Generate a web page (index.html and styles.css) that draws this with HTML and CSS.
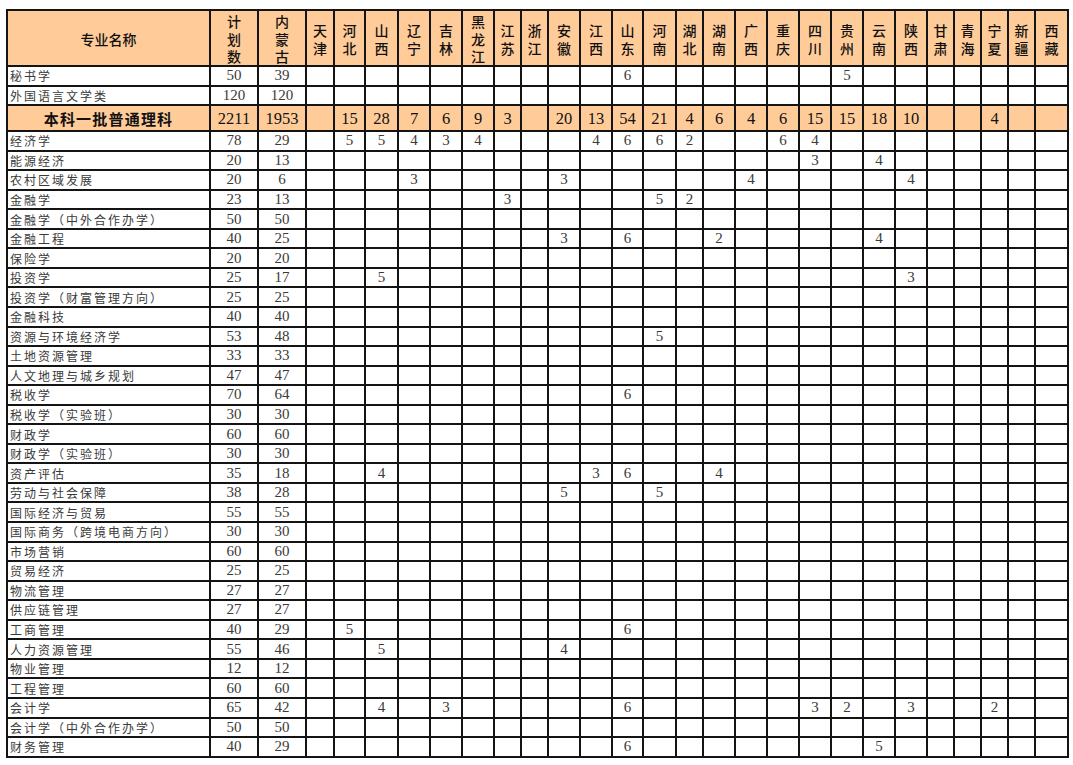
FILE: index.html
```html
<!DOCTYPE html>
<html lang="zh-CN">
<head>
<meta charset="utf-8">
<title>招生计划</title>
<link rel="stylesheet" href="styles.css">
</head>
<body>
<div class="sheet">
<table class="plan">
<colgroup>
<col class="w203"><col class="w48"><col class="w48"><col class="w28"><col class="w31"><col class="w33"><col class="w32"><col class="w32"><col class="w32"><col class="w27"><col class="w27"><col class="w32"><col class="w32"><col class="w31"><col class="w33"><col class="w27"><col class="w32"><col class="w32"><col class="w32"><col class="w32"><col class="w32"><col class="w32"><col class="w32"><col class="w27"><col class="w27"><col class="w27"><col class="w27"><col class="w33">
</colgroup>
<thead>
<tr><th><div class="hd">专业名称</div></th><th><div class="hd">计<br>划<br>数</div></th><th><div class="hd">内<br>蒙<br>古</div></th><th><div class="hd">天<br>津</div></th><th><div class="hd">河<br>北</div></th><th><div class="hd">山<br>西</div></th><th><div class="hd">辽<br>宁</div></th><th><div class="hd">吉<br>林</div></th><th><div class="hd">黑<br>龙<br>江</div></th><th><div class="hd">江<br>苏</div></th><th><div class="hd">浙<br>江</div></th><th><div class="hd">安<br>徽</div></th><th><div class="hd">江<br>西</div></th><th><div class="hd">山<br>东</div></th><th><div class="hd">河<br>南</div></th><th><div class="hd">湖<br>北</div></th><th><div class="hd">湖<br>南</div></th><th><div class="hd">广<br>西</div></th><th><div class="hd">重<br>庆</div></th><th><div class="hd">四<br>川</div></th><th><div class="hd">贵<br>州</div></th><th><div class="hd">云<br>南</div></th><th><div class="hd">陕<br>西</div></th><th><div class="hd">甘<br>肃</div></th><th><div class="hd">青<br>海</div></th><th><div class="hd">宁<br>夏</div></th><th><div class="hd">新<br>疆</div></th><th><div class="hd">西<br>藏</div></th></tr>
</thead>
<tbody>
<tr><td class="n">秘书学</td><td>50</td><td>39</td><td></td><td></td><td></td><td></td><td></td><td></td><td></td><td></td><td></td><td></td><td>6</td><td></td><td></td><td></td><td></td><td></td><td></td><td>5</td><td></td><td></td><td></td><td></td><td></td><td></td><td></td></tr>
<tr><td class="n">外国语言文学类</td><td>120</td><td>120</td><td></td><td></td><td></td><td></td><td></td><td></td><td></td><td></td><td></td><td></td><td></td><td></td><td></td><td></td><td></td><td></td><td></td><td></td><td></td><td></td><td></td><td></td><td></td><td></td><td></td></tr>
<tr class="sum"><td class="sn">本科一批普通理科</td><td>2211</td><td>1953</td><td></td><td>15</td><td>28</td><td>7</td><td>6</td><td>9</td><td>3</td><td></td><td>20</td><td>13</td><td>54</td><td>21</td><td>4</td><td>6</td><td>4</td><td>6</td><td>15</td><td>15</td><td>18</td><td>10</td><td></td><td></td><td>4</td><td></td><td></td></tr>
<tr><td class="n">经济学</td><td>78</td><td>29</td><td></td><td>5</td><td>5</td><td>4</td><td>3</td><td>4</td><td></td><td></td><td></td><td>4</td><td>6</td><td>6</td><td>2</td><td></td><td></td><td>6</td><td>4</td><td></td><td></td><td></td><td></td><td></td><td></td><td></td><td></td></tr>
<tr><td class="n">能源经济</td><td>20</td><td>13</td><td></td><td></td><td></td><td></td><td></td><td></td><td></td><td></td><td></td><td></td><td></td><td></td><td></td><td></td><td></td><td></td><td>3</td><td></td><td>4</td><td></td><td></td><td></td><td></td><td></td><td></td></tr>
<tr><td class="n">农村区域发展</td><td>20</td><td>6</td><td></td><td></td><td></td><td>3</td><td></td><td></td><td></td><td></td><td>3</td><td></td><td></td><td></td><td></td><td></td><td>4</td><td></td><td></td><td></td><td></td><td>4</td><td></td><td></td><td></td><td></td><td></td></tr>
<tr><td class="n">金融学</td><td>23</td><td>13</td><td></td><td></td><td></td><td></td><td></td><td></td><td>3</td><td></td><td></td><td></td><td></td><td>5</td><td>2</td><td></td><td></td><td></td><td></td><td></td><td></td><td></td><td></td><td></td><td></td><td></td><td></td></tr>
<tr><td class="n">金融学（中外合作办学）</td><td>50</td><td>50</td><td></td><td></td><td></td><td></td><td></td><td></td><td></td><td></td><td></td><td></td><td></td><td></td><td></td><td></td><td></td><td></td><td></td><td></td><td></td><td></td><td></td><td></td><td></td><td></td><td></td></tr>
<tr><td class="n">金融工程</td><td>40</td><td>25</td><td></td><td></td><td></td><td></td><td></td><td></td><td></td><td></td><td>3</td><td></td><td>6</td><td></td><td></td><td>2</td><td></td><td></td><td></td><td></td><td>4</td><td></td><td></td><td></td><td></td><td></td><td></td></tr>
<tr><td class="n">保险学</td><td>20</td><td>20</td><td></td><td></td><td></td><td></td><td></td><td></td><td></td><td></td><td></td><td></td><td></td><td></td><td></td><td></td><td></td><td></td><td></td><td></td><td></td><td></td><td></td><td></td><td></td><td></td><td></td></tr>
<tr><td class="n">投资学</td><td>25</td><td>17</td><td></td><td></td><td>5</td><td></td><td></td><td></td><td></td><td></td><td></td><td></td><td></td><td></td><td></td><td></td><td></td><td></td><td></td><td></td><td></td><td>3</td><td></td><td></td><td></td><td></td><td></td></tr>
<tr><td class="n">投资学（财富管理方向）</td><td>25</td><td>25</td><td></td><td></td><td></td><td></td><td></td><td></td><td></td><td></td><td></td><td></td><td></td><td></td><td></td><td></td><td></td><td></td><td></td><td></td><td></td><td></td><td></td><td></td><td></td><td></td><td></td></tr>
<tr><td class="n">金融科技</td><td>40</td><td>40</td><td></td><td></td><td></td><td></td><td></td><td></td><td></td><td></td><td></td><td></td><td></td><td></td><td></td><td></td><td></td><td></td><td></td><td></td><td></td><td></td><td></td><td></td><td></td><td></td><td></td></tr>
<tr><td class="n">资源与环境经济学</td><td>53</td><td>48</td><td></td><td></td><td></td><td></td><td></td><td></td><td></td><td></td><td></td><td></td><td></td><td>5</td><td></td><td></td><td></td><td></td><td></td><td></td><td></td><td></td><td></td><td></td><td></td><td></td><td></td></tr>
<tr><td class="n">土地资源管理</td><td>33</td><td>33</td><td></td><td></td><td></td><td></td><td></td><td></td><td></td><td></td><td></td><td></td><td></td><td></td><td></td><td></td><td></td><td></td><td></td><td></td><td></td><td></td><td></td><td></td><td></td><td></td><td></td></tr>
<tr><td class="n">人文地理与城乡规划</td><td>47</td><td>47</td><td></td><td></td><td></td><td></td><td></td><td></td><td></td><td></td><td></td><td></td><td></td><td></td><td></td><td></td><td></td><td></td><td></td><td></td><td></td><td></td><td></td><td></td><td></td><td></td><td></td></tr>
<tr><td class="n">税收学</td><td>70</td><td>64</td><td></td><td></td><td></td><td></td><td></td><td></td><td></td><td></td><td></td><td></td><td>6</td><td></td><td></td><td></td><td></td><td></td><td></td><td></td><td></td><td></td><td></td><td></td><td></td><td></td><td></td></tr>
<tr><td class="n">税收学（实验班）</td><td>30</td><td>30</td><td></td><td></td><td></td><td></td><td></td><td></td><td></td><td></td><td></td><td></td><td></td><td></td><td></td><td></td><td></td><td></td><td></td><td></td><td></td><td></td><td></td><td></td><td></td><td></td><td></td></tr>
<tr><td class="n">财政学</td><td>60</td><td>60</td><td></td><td></td><td></td><td></td><td></td><td></td><td></td><td></td><td></td><td></td><td></td><td></td><td></td><td></td><td></td><td></td><td></td><td></td><td></td><td></td><td></td><td></td><td></td><td></td><td></td></tr>
<tr><td class="n">财政学（实验班）</td><td>30</td><td>30</td><td></td><td></td><td></td><td></td><td></td><td></td><td></td><td></td><td></td><td></td><td></td><td></td><td></td><td></td><td></td><td></td><td></td><td></td><td></td><td></td><td></td><td></td><td></td><td></td><td></td></tr>
<tr><td class="n">资产评估</td><td>35</td><td>18</td><td></td><td></td><td>4</td><td></td><td></td><td></td><td></td><td></td><td></td><td>3</td><td>6</td><td></td><td></td><td>4</td><td></td><td></td><td></td><td></td><td></td><td></td><td></td><td></td><td></td><td></td><td></td></tr>
<tr><td class="n">劳动与社会保障</td><td>38</td><td>28</td><td></td><td></td><td></td><td></td><td></td><td></td><td></td><td></td><td>5</td><td></td><td></td><td>5</td><td></td><td></td><td></td><td></td><td></td><td></td><td></td><td></td><td></td><td></td><td></td><td></td><td></td></tr>
<tr><td class="n">国际经济与贸易</td><td>55</td><td>55</td><td></td><td></td><td></td><td></td><td></td><td></td><td></td><td></td><td></td><td></td><td></td><td></td><td></td><td></td><td></td><td></td><td></td><td></td><td></td><td></td><td></td><td></td><td></td><td></td><td></td></tr>
<tr><td class="n">国际商务（跨境电商方向）</td><td>30</td><td>30</td><td></td><td></td><td></td><td></td><td></td><td></td><td></td><td></td><td></td><td></td><td></td><td></td><td></td><td></td><td></td><td></td><td></td><td></td><td></td><td></td><td></td><td></td><td></td><td></td><td></td></tr>
<tr><td class="n">市场营销</td><td>60</td><td>60</td><td></td><td></td><td></td><td></td><td></td><td></td><td></td><td></td><td></td><td></td><td></td><td></td><td></td><td></td><td></td><td></td><td></td><td></td><td></td><td></td><td></td><td></td><td></td><td></td><td></td></tr>
<tr><td class="n">贸易经济</td><td>25</td><td>25</td><td></td><td></td><td></td><td></td><td></td><td></td><td></td><td></td><td></td><td></td><td></td><td></td><td></td><td></td><td></td><td></td><td></td><td></td><td></td><td></td><td></td><td></td><td></td><td></td><td></td></tr>
<tr><td class="n">物流管理</td><td>27</td><td>27</td><td></td><td></td><td></td><td></td><td></td><td></td><td></td><td></td><td></td><td></td><td></td><td></td><td></td><td></td><td></td><td></td><td></td><td></td><td></td><td></td><td></td><td></td><td></td><td></td><td></td></tr>
<tr><td class="n">供应链管理</td><td>27</td><td>27</td><td></td><td></td><td></td><td></td><td></td><td></td><td></td><td></td><td></td><td></td><td></td><td></td><td></td><td></td><td></td><td></td><td></td><td></td><td></td><td></td><td></td><td></td><td></td><td></td><td></td></tr>
<tr><td class="n">工商管理</td><td>40</td><td>29</td><td></td><td>5</td><td></td><td></td><td></td><td></td><td></td><td></td><td></td><td></td><td>6</td><td></td><td></td><td></td><td></td><td></td><td></td><td></td><td></td><td></td><td></td><td></td><td></td><td></td><td></td></tr>
<tr><td class="n">人力资源管理</td><td>55</td><td>46</td><td></td><td></td><td>5</td><td></td><td></td><td></td><td></td><td></td><td>4</td><td></td><td></td><td></td><td></td><td></td><td></td><td></td><td></td><td></td><td></td><td></td><td></td><td></td><td></td><td></td><td></td></tr>
<tr><td class="n">物业管理</td><td>12</td><td>12</td><td></td><td></td><td></td><td></td><td></td><td></td><td></td><td></td><td></td><td></td><td></td><td></td><td></td><td></td><td></td><td></td><td></td><td></td><td></td><td></td><td></td><td></td><td></td><td></td><td></td></tr>
<tr><td class="n">工程管理</td><td>60</td><td>60</td><td></td><td></td><td></td><td></td><td></td><td></td><td></td><td></td><td></td><td></td><td></td><td></td><td></td><td></td><td></td><td></td><td></td><td></td><td></td><td></td><td></td><td></td><td></td><td></td><td></td></tr>
<tr><td class="n">会计学</td><td>65</td><td>42</td><td></td><td></td><td>4</td><td></td><td>3</td><td></td><td></td><td></td><td></td><td></td><td>6</td><td></td><td></td><td></td><td></td><td></td><td>3</td><td>2</td><td></td><td>3</td><td></td><td></td><td>2</td><td></td><td></td></tr>
<tr><td class="n">会计学（中外合作办学）</td><td>50</td><td>50</td><td></td><td></td><td></td><td></td><td></td><td></td><td></td><td></td><td></td><td></td><td></td><td></td><td></td><td></td><td></td><td></td><td></td><td></td><td></td><td></td><td></td><td></td><td></td><td></td><td></td></tr>
<tr><td class="n">财务管理</td><td>40</td><td>29</td><td></td><td></td><td></td><td></td><td></td><td></td><td></td><td></td><td></td><td></td><td>6</td><td></td><td></td><td></td><td></td><td></td><td></td><td></td><td>5</td><td></td><td></td><td></td><td></td><td></td><td></td></tr>
</tbody>
</table>
</div>
</body>
</html>
```

FILE: styles.css
```css
html, body {
  margin: 0;
  padding: 0;
  background: #ffffff;
}

.sheet {
  padding: 9px 0 0 6px;
}

.plan {
  border-collapse: collapse;
  table-layout: fixed;
  width: 1063px;
}

.w203 { width: 203px; }
.w48 { width: 48px; }
.w33 { width: 33px; }
.w32 { width: 32px; }
.w31 { width: 31px; }
.w28 { width: 28px; }
.w27 { width: 27px; }

.plan th,
.plan td {
  border: 2px solid #141414;
  padding: 0;
  text-align: center;
  white-space: nowrap;
  overflow: hidden;
}

.plan th {
  overflow: visible;
  background: #ffcc99;
  height: 54px;
  vertical-align: top;
  font-family: "Noto Sans CJK SC", sans-serif;
  font-weight: 500;
  font-size: 14px;
  line-height: 17.5px;
  color: #111;
}

.hd {
  height: 54px;
  box-sizing: border-box;
  padding-top: 3px;
  display: flex;
  flex-direction: column;
  justify-content: center;
  align-items: center;
}

.plan tbody tr {
  height: 19.55px;
}

.plan td {
  font-family: "Liberation Serif", "Noto Sans CJK SC", serif;
  font-size: 15px;
  line-height: 15px;
  color: #3a3a3a;
  vertical-align: middle;
}

.plan td.n {
  text-align: left;
  padding-left: 2px;
  font-family: "Noto Sans CJK SC", sans-serif;
  font-size: 12px;
  letter-spacing: 2px;
  color: #3a3a3a;
}

.plan tr.sum {
  height: 26px;
}

.plan tr.sum td {
  background: #ffcc99;
  font-size: 16.5px;
  color: #111;
}

.plan tr.sum td.sn {
  font-family: "Noto Sans CJK SC", sans-serif;
  font-weight: 700;
  font-size: 15px;
  letter-spacing: 1.2px;
}
```
